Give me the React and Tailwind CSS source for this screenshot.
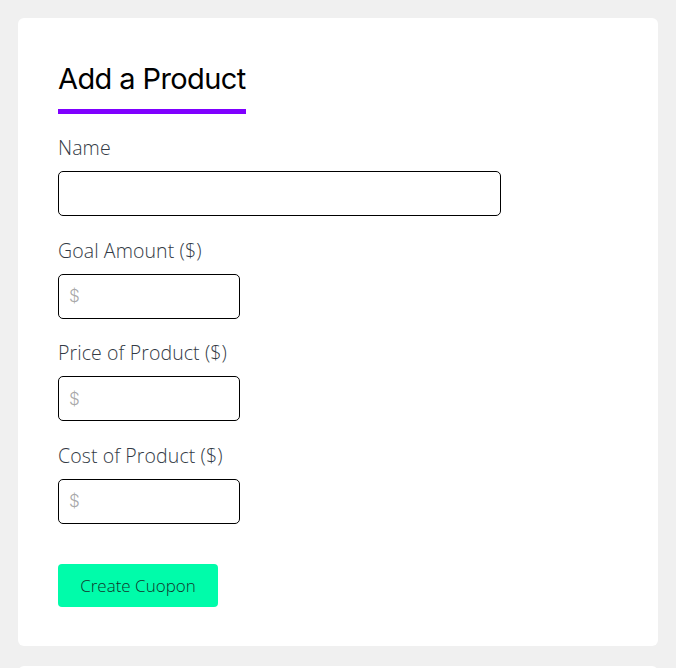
export default function App() {
  const fields = [
    { label: 'Name', wide: true },
    { label: 'Goal Amount ($)' },
    { label: 'Price of Product ($)' },
    { label: 'Cost of Product ($)' },
  ];

  return (
    <div
      className="min-h-screen bg-[#f0f0f0] p-[18px] flex flex-col gap-[20px]"
      style={{ fontFamily: 'Inter, "Noto Sans", sans-serif' }}
    >
      <div className="bg-white rounded-[6px] px-[40px] pt-[40px] pb-[39px]">
        <h2 className="inline-block text-[29px] leading-[42px] font-normal text-black pb-[9px] border-b-[5px] border-[#7f00ff] tracking-[-0.6px]">
          Add a Product
        </h2>

        <div className="flex flex-col gap-[20.67px] mt-[20px]">
          {fields.map((f) => (
            <div key={f.label} className="flex flex-col">
              <label
                className="text-[19.5px] leading-[24px] font-light text-[#333a45] pt-[2px] mb-[11px] tracking-[0.1px]"
                style={{ fontFamily: '"Open Sans", sans-serif' }}
              >
                {f.label}
              </label>
              <input
                type="text"
                placeholder={f.wide ? '' : '$'}
                className={
                  (f.wide ? 'w-[443px]' : 'w-[182px]') +
                  ' h-[45px] border border-black rounded-[5px] px-[10px] text-[17px] font-light placeholder:text-[#a8a8a8] outline-none'
                }
              />
            </div>
          ))}
        </div>

        <button
          className="mt-[40px] w-[160px] h-[43px] rounded-[4px] bg-[#00fcaa] text-[17px] font-light text-[#12352b]"
          style={{ fontFamily: '"Open Sans", sans-serif' }}
        >
          Create Cuopon
        </button>
      </div>

      <div className="bg-white rounded-[6px] h-[200px]" />
    </div>
  );
}
